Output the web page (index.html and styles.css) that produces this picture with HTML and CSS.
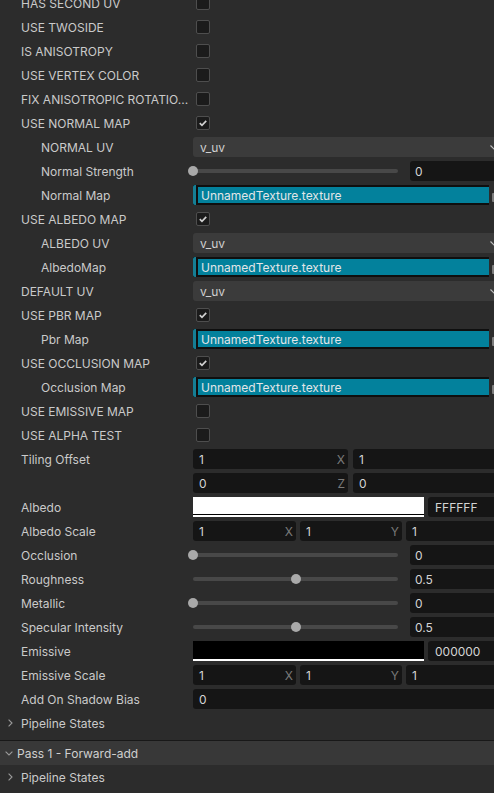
FILE: index.html
```html
<!DOCTYPE html>
<html>
<head>
<meta charset="utf-8">
<link rel="stylesheet" href="styles.css">
</head>
<body>
<div class="panel">
  <div class="row"><div class="label">HAS SECOND UV</div><div class="value"><span class="cb"></span></div></div>
  <div class="row"><div class="label">USE TWOSIDE</div><div class="value"><span class="cb"></span></div></div>
  <div class="row"><div class="label">IS ANISOTROPY</div><div class="value"><span class="cb"></span></div></div>
  <div class="row"><div class="label">USE VERTEX COLOR</div><div class="value"><span class="cb"></span></div></div>
  <div class="row"><div class="label">FIX ANISOTROPIC ROTATIO...</div><div class="value"><span class="cb"></span></div></div>
  <div class="row"><div class="label">USE NORMAL MAP</div><div class="value"><span class="cb on"><svg viewBox="0 0 13 13" width="13" height="13"><path d="M3 6.6 L5.4 9 L10 4.2" fill="none" stroke="#d2d2d2" stroke-width="1.8"/></svg></span></div></div>
  <div class="row sub"><div class="label">NORMAL UV</div><div class="value"><div class="select"><span>v_uv</span><svg class="arrow" viewBox="0 0 8 5" width="8" height="5"><path d="M0.5 0.5 L4 4 L7.5 0.5" fill="none" stroke="#bdbdbd" stroke-width="1.2"/></svg></div></div></div>
  <div class="row sub"><div class="label">Normal Strength</div><div class="value slider-wrap"><div class="slider"><div class="track"></div><div class="thumb" style="left:0%"></div></div><div class="num">0</div></div></div>
  <div class="row sub"><div class="label">Normal Map</div><div class="value"><div class="tex"><div class="tex-bar"></div><div class="tex-fill">UnnamedTexture.texture</div></div><span class="tex-icon"></span></div></div>
  <div class="row"><div class="label">USE ALBEDO MAP</div><div class="value"><span class="cb on"><svg viewBox="0 0 13 13" width="13" height="13"><path d="M3 6.6 L5.4 9 L10 4.2" fill="none" stroke="#d2d2d2" stroke-width="1.8"/></svg></span></div></div>
  <div class="row sub"><div class="label">ALBEDO UV</div><div class="value"><div class="select"><span>v_uv</span><svg class="arrow" viewBox="0 0 8 5" width="8" height="5"><path d="M0.5 0.5 L4 4 L7.5 0.5" fill="none" stroke="#bdbdbd" stroke-width="1.2"/></svg></div></div></div>
  <div class="row sub"><div class="label">AlbedoMap</div><div class="value"><div class="tex"><div class="tex-bar"></div><div class="tex-fill">UnnamedTexture.texture</div></div><span class="tex-icon"></span></div></div>
  <div class="row"><div class="label">DEFAULT UV</div><div class="value"><div class="select"><span>v_uv</span><svg class="arrow" viewBox="0 0 8 5" width="8" height="5"><path d="M0.5 0.5 L4 4 L7.5 0.5" fill="none" stroke="#bdbdbd" stroke-width="1.2"/></svg></div></div></div>
  <div class="row"><div class="label">USE PBR MAP</div><div class="value"><span class="cb on"><svg viewBox="0 0 13 13" width="13" height="13"><path d="M3 6.6 L5.4 9 L10 4.2" fill="none" stroke="#d2d2d2" stroke-width="1.8"/></svg></span></div></div>
  <div class="row sub"><div class="label">Pbr Map</div><div class="value"><div class="tex"><div class="tex-bar"></div><div class="tex-fill">UnnamedTexture.texture</div></div><span class="tex-icon"></span></div></div>
  <div class="row"><div class="label">USE OCCLUSION MAP</div><div class="value"><span class="cb on"><svg viewBox="0 0 13 13" width="13" height="13"><path d="M3 6.6 L5.4 9 L10 4.2" fill="none" stroke="#d2d2d2" stroke-width="1.8"/></svg></span></div></div>
  <div class="row sub"><div class="label">Occlusion Map</div><div class="value"><div class="tex"><div class="tex-bar"></div><div class="tex-fill">UnnamedTexture.texture</div></div><span class="tex-icon"></span></div></div>
  <div class="row"><div class="label">USE EMISSIVE MAP</div><div class="value"><span class="cb"></span></div></div>
  <div class="row"><div class="label">USE ALPHA TEST</div><div class="value"><span class="cb"></span></div></div>
  <div class="row"><div class="label">Tiling Offset</div><div class="value vec2"><div class="field"><span>1</span><em>X</em></div><div class="field"><span>1</span></div></div></div>
  <div class="row"><div class="label"></div><div class="value vec2"><div class="field"><span>0</span><em>Z</em></div><div class="field"><span>0</span></div></div></div>
  <div class="row"><div class="label">Albedo</div><div class="value color"><div class="swatch white"><div class="sw-color"></div><div class="sw-gap"></div><div class="sw-alpha"></div></div><div class="hex">FFFFFF</div></div></div>
  <div class="row"><div class="label">Albedo Scale</div><div class="value vec3"><div class="field"><span>1</span><em>X</em></div><div class="field"><span>1</span><em>Y</em></div><div class="field"><span>1</span></div></div></div>
  <div class="row"><div class="label">Occlusion</div><div class="value slider-wrap"><div class="slider"><div class="track"></div><div class="thumb" style="left:0%"></div></div><div class="num">0</div></div></div>
  <div class="row"><div class="label">Roughness</div><div class="value slider-wrap"><div class="slider"><div class="track"></div><div class="thumb" style="left:50%"></div></div><div class="num">0.5</div></div></div>
  <div class="row"><div class="label">Metallic</div><div class="value slider-wrap"><div class="slider"><div class="track"></div><div class="thumb" style="left:0%"></div></div><div class="num">0</div></div></div>
  <div class="row"><div class="label">Specular Intensity</div><div class="value slider-wrap"><div class="slider"><div class="track"></div><div class="thumb" style="left:50%"></div></div><div class="num">0.5</div></div></div>
  <div class="row"><div class="label">Emissive</div><div class="value color"><div class="swatch black"><div class="sw-color"></div><div class="sw-gap"></div><div class="sw-alpha"></div></div><div class="hex">000000</div></div></div>
  <div class="row"><div class="label">Emissive Scale</div><div class="value vec3"><div class="field"><span>1</span><em>X</em></div><div class="field"><span>1</span><em>Y</em></div><div class="field"><span>1</span></div></div></div>
  <div class="row"><div class="label">Add On Shadow Bias</div><div class="value"><div class="field full"><span>0</span></div></div></div>
  <div class="fold"><svg class="chev-r" viewBox="0 0 5 8" width="5" height="8"><path d="M0.6 0.6 L4 4 L0.6 7.4" fill="none" stroke="#9a9a9a" stroke-width="1.1"/></svg><span>Pipeline States</span></div>
  <div class="pass"><svg class="chev-d" viewBox="0 0 8 5" width="8" height="5"><path d="M0.6 0.6 L4 4 L7.4 0.6" fill="none" stroke="#9a9a9a" stroke-width="1.1"/></svg><span>Pass 1 - Forward-add</span></div>
  <div class="fold"><svg class="chev-r" viewBox="0 0 5 8" width="5" height="8"><path d="M0.6 0.6 L4 4 L0.6 7.4" fill="none" stroke="#9a9a9a" stroke-width="1.1"/></svg><span>Pipeline States</span></div>
</div>
</body>
</html>
```
FILE: styles.css
```css
html, body {
  margin: 0;
  padding: 0;
  width: 494px;
  height: 793px;
  overflow: hidden;
  background: #2c2c2c;
}
body {
  font-family: "Inter", "Liberation Sans", sans-serif;
  font-size: 12px;
  color: #cacaca;
}
.panel {
  width: 510px;
  margin-top: -9px;
}
.row {
  display: grid;
  grid-template-columns: 193px 312px;
  height: 24px;
  align-items: center;
}
.label {
  padding-left: 21px;
  padding-right: 2px;
  white-space: nowrap;
  overflow: hidden;
  text-overflow: ellipsis;
}
.row.sub .label {
  padding-left: 41px;
}
.value {
  display: flex;
  align-items: center;
  height: 20px;
}
.cb {
  box-sizing: border-box;
  width: 14px;
  height: 14px;
  margin-left: 3px;
  border: 1px solid #4e4e4e;
  border-radius: 2px;
  background: #1b1b1b;
  display: flex;
  align-items: center;
  justify-content: center;
}
.cb svg {
  display: block;
  width: 12px;
  height: 12px;
}
.select {
  flex: 1;
  height: 20px;
  background: #3b3b3b;
  border-radius: 3px;
  display: flex;
  align-items: center;
  justify-content: space-between;
  padding: 0 7px;
  color: #d0d0d0;
}
.select .arrow {
  display: block;
}
.slider-wrap {
  gap: 12px;
}
.slider {
  position: relative;
  width: 205px;
  height: 20px;
  display: flex;
  align-items: center;
}
.track {
  width: 100%;
  height: 4px;
  border-radius: 2px;
  background: #484848;
}
.thumb {
  position: absolute;
  top: 5px;
  width: 10px;
  height: 10px;
  margin-left: -5px;
  border-radius: 50%;
  background: #a9a9a9;
}
.num, .hex {
  flex: 1;
  height: 20px;
  background: #151515;
  border-radius: 3px;
  display: flex;
  align-items: center;
  padding-left: 5px;
  color: #d4d4d4;
}
.tex {
  width: 296px;
  height: 20px;
  box-sizing: border-box;
  background: #0f0f0f;
  display: flex;
  align-items: stretch;
  padding: 2px 0 2px 0;
}
.tex-bar {
  width: 3px;
  margin: -2px 2px -2px 0;
  background: #157f95;
  border-radius: 2px 0 0 2px;
}
.tex-fill {
  flex: 1;
  background: #03819c;
  color: #e2e6e8;
  display: flex;
  align-items: center;
  padding-left: 3px;
}
.tex-icon {
  width: 6px;
  height: 9px;
  margin-left: 3px;
  margin-top: 5px;
  background: #7c7c7c;
  border-radius: 1px;
}
.vec2, .vec3 {
  display: grid;
  gap: 5px;
}
.vec2 {
  grid-template-columns: 155px 1fr;
}
.vec3 {
  grid-template-columns: 103px 102px 1fr;
  gap: 4px;
}
.field {
  height: 20px;
  background: #151515;
  border-radius: 3px;
  display: flex;
  align-items: center;
  justify-content: space-between;
  padding: 0 3px 0 6px;
  color: #d4d4d4;
}
.field.full {
  flex: 1;
}
.field em {
  font-style: normal;
  color: #7a7a7a;
  font-size: 12px;
}
.color {
  gap: 4px;
}
.swatch {
  width: 231px;
  height: 20px;
  display: flex;
  flex-direction: column;
}
.sw-color {
  height: 17px;
}
.sw-gap {
  height: 1px;
  background: #000;
}
.sw-alpha {
  height: 2px;
  background: #fff;
}
.swatch.white .sw-color {
  background: #ffffff;
}
.swatch.black .sw-color {
  background: #000000;
}
.hex {
  padding-left: 7px;
}
.fold {
  height: 24px;
  display: flex;
  align-items: center;
  padding-left: 8px;
}
.chev-r {
  display: block;
  margin-right: 8px;
}
.pass {
  margin-top: 5px;
  height: 24px;
  border-top: 1px solid #181818;
  background: #383838;
  display: flex;
  align-items: center;
  padding-left: 5px;
  color: #cfcfcf;
}
.chev-d {
  display: block;
  margin-right: 4px;
}
```
